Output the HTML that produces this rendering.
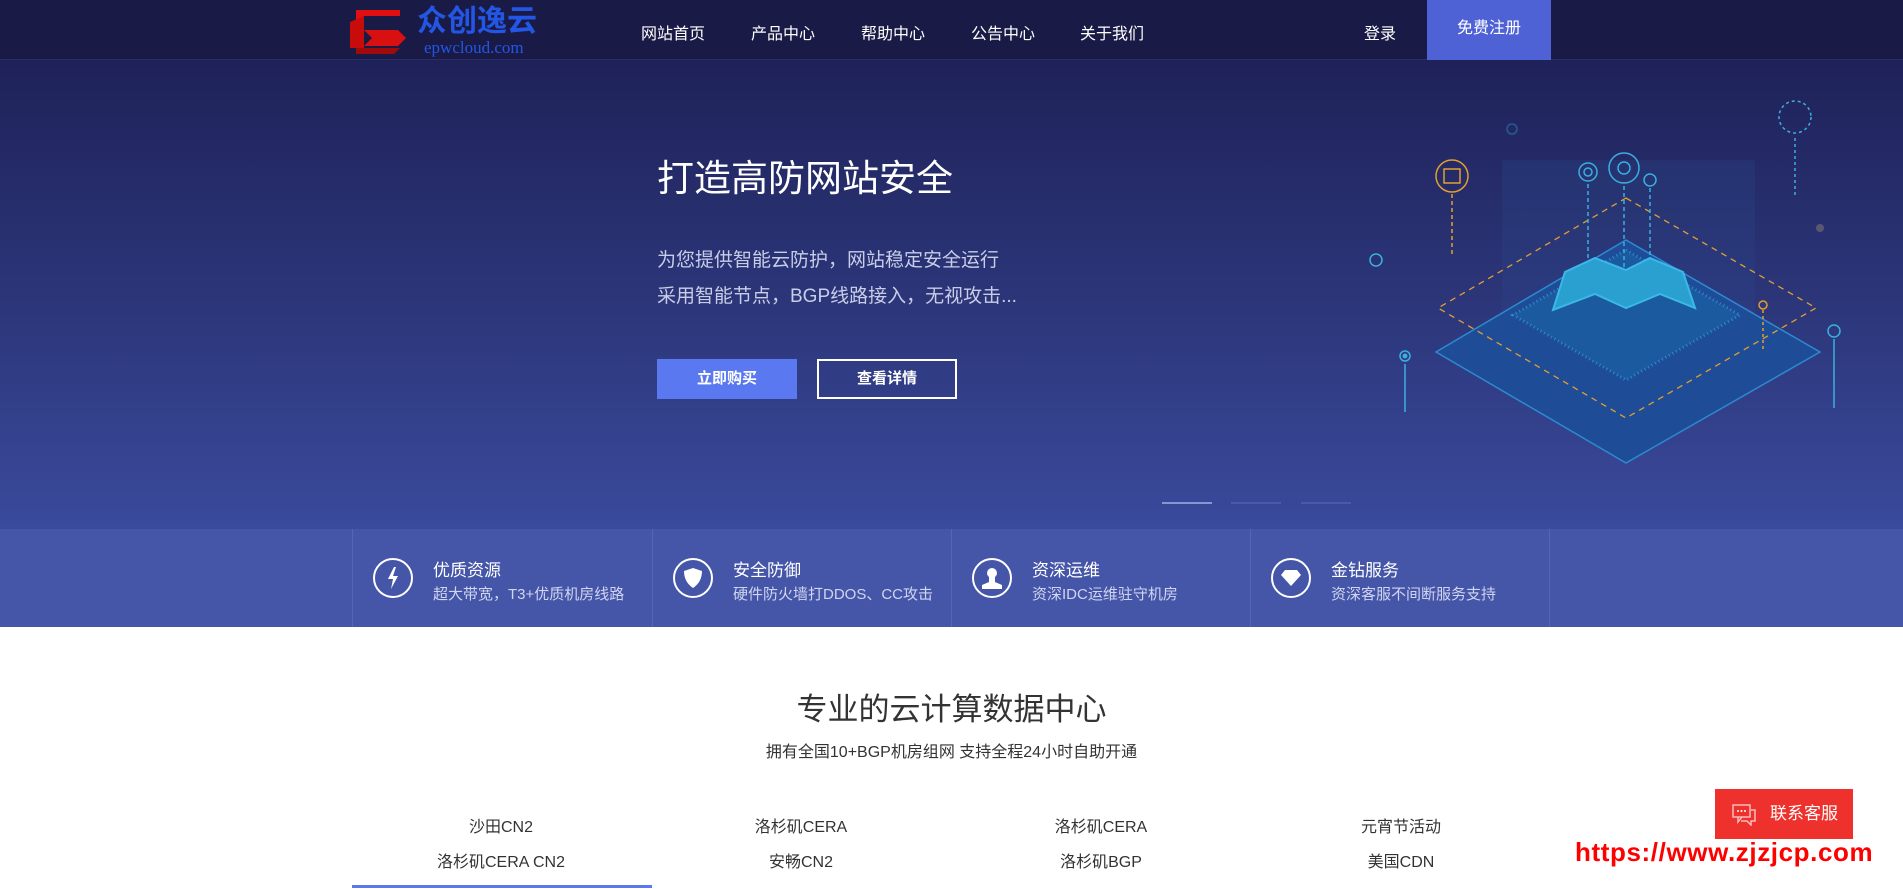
<!DOCTYPE html>
<html><head><meta charset="utf-8"><style>
*{margin:0;padding:0;box-sizing:border-box}
body{width:1903px;height:889px;overflow:hidden;font-family:"Liberation Sans","Noto Sans CJK SC",sans-serif;background:#fff;position:relative}
.abs{position:absolute}
.nav{left:0;top:0;width:1903px;height:60px;background:#191a45;border-bottom:1px solid #2a2d6a}
.nav a{position:absolute;top:20px;color:#fff;font-size:16px;text-decoration:none}
.hero{left:0;top:60px;width:1903px;height:469px;background:linear-gradient(180deg,#1f2259 0%,#2b3578 50%,#3a4a9c 100%)}
.feat{left:0;top:529px;width:1903px;height:98px;background:#4555a8}
.fi{position:absolute;top:0;height:98px;border-left:1px solid #5565b3}
.ic{position:absolute;left:20px;top:29px;width:40px;height:40px;border:2px solid #fff;border-radius:50%}
.ft{position:absolute;left:80px;top:27px;color:#fff;font-size:17px}
.fs{position:absolute;left:80px;top:54px;color:#d0d5f0;font-size:15px;white-space:nowrap}
.tab{position:absolute;width:300px;text-align:center;font-size:16px;color:#333}
</style></head><body>
<div class="abs nav">
 <svg class="abs" style="left:350px;top:8px" width="64" height="48" viewBox="0 0 64 48">
  <polygon points="6,2 50,2 50,8 14,8 6,14" fill="#e01010"/>
  <polygon points="0,14 14,8 14,40 0,40" fill="#c80c0c"/>
  <polygon points="14,22 48,22 56,30 48,38 14,38 22,30" fill="#d81010"/>
  <polygon points="6,40 50,40 44,46 6,46" fill="#a00a0a"/>
 </svg>
 <div class="abs" style="left:417px;top:5px;color:#2456e6;font-size:30px;line-height:34px;font-weight:bold">众创逸云</div>
 <div class="abs" style="left:424px;top:38px;color:#2456e6;font-size:17px;font-family:'Liberation Serif',serif">epwcloud.com</div>
 <a style="left:641px">网站首页</a><a style="left:751px">产品中心</a><a style="left:861px">帮助中心</a><a style="left:971px">公告中心</a><a style="left:1080px">关于我们</a>
 <a style="left:1364px">登录</a>
 <div class="abs" style="left:1427px;top:0;width:124px;height:60px;background:#4e62d6;color:#fff;font-size:16px;text-align:center;line-height:58px">免费注册</div>
</div>
<div class="abs hero">
 <div class="abs" style="left:657px;top:88px;color:#fff;font-size:37px">打造高防网站安全</div>
 <div class="abs" style="left:657px;top:183px;color:#c8cde8;font-size:19px;line-height:36px">为您提供智能云防护，网站稳定安全运行<br>采用智能节点，BGP线路接入，无视攻击...</div>
 <div class="abs" style="left:657px;top:299px;width:140px;height:40px;background:#5a78f0;color:#fff;font-size:15px;text-align:center;line-height:40px;font-weight:bold">立即购买</div>
 <div class="abs" style="left:817px;top:299px;width:140px;height:40px;border:2px solid #fff;color:#fff;font-size:15px;text-align:center;line-height:36px;font-weight:bold">查看详情</div>
 <div class="abs" style="left:1162px;top:442px;width:50px;height:2px;background:#8a94d0"></div>
 <div class="abs" style="left:1231px;top:442px;width:50px;height:2px;background:#4a5aa8"></div>
 <div class="abs" style="left:1301px;top:442px;width:50px;height:2px;background:#4a5aa8"></div>
 <svg class="abs" style="left:1350px;top:20px" width="540" height="400" viewBox="0 0 540 400">
  <rect x="152" y="80" width="253" height="200" fill="#2a4a90" opacity="0.25"/>
  <polygon points="276,160 470,272 276,383 86,272" fill="#1f4c96" stroke="#2c8ad0" stroke-width="1.5"/>
  <polygon points="276,170 390,235 276,300 163,235" fill="#1c5aa0" stroke="#2c8ad0" stroke-dasharray="1 3" stroke-width="3"/>
  <polygon points="245,178 276,190 300,178 333,192 345,228 310,214 276,228 245,214 203,230 215,192" fill="#2aa0d0" stroke="#3ab8e8" stroke-width="2"/>
  <polygon points="276,118 466,228 276,338 88,228" fill="none" stroke="#e0a030" stroke-dasharray="6 5" stroke-width="1.3"/>
  <g stroke="#3ab0e0" fill="none" stroke-width="1.5">
   <circle cx="238" cy="92" r="9"/><circle cx="238" cy="92" r="4"/>
   <circle cx="274" cy="88" r="15"/><circle cx="274" cy="88" r="6"/>
   <circle cx="300" cy="100" r="6"/>
   <line x1="238" y1="104" x2="238" y2="180" stroke-dasharray="4 3"/><line x1="274" y1="106" x2="274" y2="190" stroke-dasharray="4 3"/><line x1="300" y1="108" x2="300" y2="180" stroke-dasharray="4 3"/>
   <circle cx="445" cy="37" r="16" stroke-dasharray="3 3"/><line x1="445" y1="58" x2="445" y2="118" stroke-dasharray="3 3"/>
   <circle cx="26" cy="180" r="6"/><circle cx="55" cy="276" r="5"/><line x1="55" y1="284" x2="55" y2="332"/>
   <circle cx="484" cy="251" r="6"/><line x1="484" y1="259" x2="484" y2="328"/>
  </g>
  <circle cx="55" cy="276" r="2.5" fill="#3ab0e0"/>
  <circle cx="162" cy="49" r="5" stroke="#2a5a90" stroke-width="1.5" fill="none"/>
  <circle cx="470" cy="148" r="4" fill="#5a5870"/>
  <g stroke="#e0a030" fill="none" stroke-width="1.5"><circle cx="102" cy="96" r="16"/><rect x="94" y="89" width="16" height="14"/><line x1="102" y1="114" x2="102" y2="174" stroke-dasharray="4 3"/><circle cx="413" cy="225" r="4"/><line x1="413" y1="230" x2="413" y2="270" stroke-dasharray="3 3"/></g>
 </svg>
</div>
<div class="abs feat">
 <div class="fi" style="left:352px;width:300px"><div class="ic"></div><svg class="abs" style="left:34px;top:38px" width="12" height="22"><polygon points="7,0 1,12 6,12 4,22 11,9 6,9 9,0" fill="#fff"/></svg><div class="ft">优质资源</div><div class="fs">超大带宽，T3+优质机房线路</div></div>
 <div class="fi" style="left:652px;width:299px"><div class="ic"></div><svg class="abs" style="left:31px;top:39px" width="18" height="20"><path d="M9 0 L18 3 Q18 14 9 20 Q0 14 0 3Z" fill="#fff"/></svg><div class="ft">安全防御</div><div class="fs">硬件防火墙打DDOS、CC攻击</div></div>
 <div class="fi" style="left:951px;width:299px"><div class="ic"></div><svg class="abs" style="left:30px;top:38px" width="20" height="22"><circle cx="10" cy="6" r="5" fill="#fff"/><path d="M7 10h6v5l7 3v4H0v-4l7-3z" fill="#fff"/></svg><div class="ft">资深运维</div><div class="fs">资深IDC运维驻守机房</div></div>
 <div class="fi" style="left:1250px;width:300px;border-right:1px solid #5565b3"><div class="ic"></div><svg class="abs" style="left:30px;top:41px" width="20" height="16"><polygon points="4,0 16,0 20,5 10,16 0,5" fill="#fff"/></svg><div class="ft">金钻服务</div><div class="fs">资深客服不间断服务支持</div></div>
</div>
<div class="abs" style="left:0;top:684px;width:1903px;text-align:center;font-size:31px;color:#333">专业的云计算数据中心</div>
<div class="abs" style="left:0;top:738px;width:1903px;text-align:center;font-size:16px;color:#333">拥有全国10+BGP机房组网 支持全程24小时自助开通</div>
<div class="tab" style="left:351px;top:813px">沙田CN2</div><div class="tab" style="left:351px;top:848px">洛杉矶CERA CN2</div>
<div class="tab" style="left:651px;top:813px">洛杉矶CERA</div><div class="tab" style="left:651px;top:848px">安畅CN2</div>
<div class="tab" style="left:951px;top:813px">洛杉矶CERA</div><div class="tab" style="left:951px;top:848px">洛杉矶BGP</div>
<div class="tab" style="left:1251px;top:813px">元宵节活动</div><div class="tab" style="left:1251px;top:848px">美国CDN</div>
<div class="abs" style="left:352px;top:885px;width:300px;height:3px;background:#5a78f0"></div>
<div class="abs" style="left:1715px;top:789px;width:138px;height:50px;background:#ee312c;color:#fff;font-size:17px;line-height:50px;padding-left:55px">联系客服</div>
<svg class="abs" style="left:1732px;top:804px" width="24" height="22"><rect x="1" y="1" width="17" height="12" fill="none" stroke="#fbb" stroke-width="1.5"/><path d="M6 13v5l4-5M19 6h4v11h-4v4l-4-4h-6" fill="none" stroke="#fbb" stroke-width="1.5"/><circle cx="6" cy="7" r="1" fill="#fff"/><circle cx="9.5" cy="7" r="1" fill="#fff"/><circle cx="13" cy="7" r="1" fill="#fff"/></svg>
<div class="abs" style="left:1575px;top:837px;color:#f00;font-size:26px;font-weight:bold;letter-spacing:0.6px;white-space:nowrap">https://www.zjzjcp.com</div>
</body></html>
